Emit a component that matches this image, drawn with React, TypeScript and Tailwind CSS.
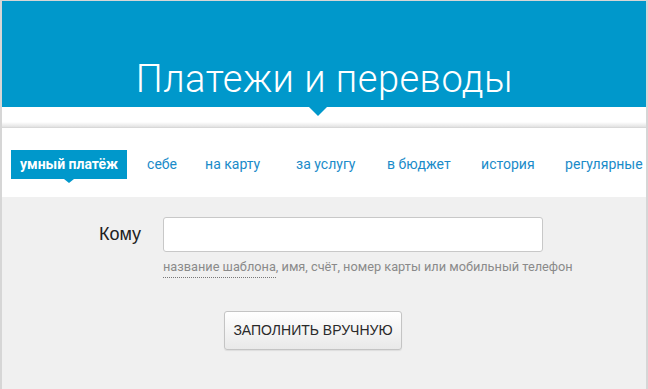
export default function App() {
  const tabs = [
    { label: "себе", w: "w-[58px]" },
    { label: "на карту", w: "w-[91px]" },
    { label: "за услугу", w: "w-[91px]" },
    { label: "в бюджет", w: "w-[94px]" },
    { label: "история", w: "w-[84px]" },
    { label: "регулярные", w: "w-[84px]" },
  ];

  return (
    <div className="w-[648px] h-[389px] overflow-hidden flex flex-col bg-[#f0f0f0] border-x-2 border-t border-[#d6d6d6] font-['Roboto',sans-serif]">
      {/* Header */}
      <header className="relative h-[106px] shrink-0 bg-[#0098cb] flex items-end justify-center pb-[9px] -ml-px">
        <h1 className="text-[38px] leading-none font-light text-white tracking-[0.5px] pl-[2px] whitespace-nowrap">
          Платежи и переводы
        </h1>
        <span className="absolute left-[308px] -bottom-[9px] w-0 h-0 border-x-[9px] border-x-transparent border-t-[9px] border-t-[#0098cb]" />
      </header>

      <div className="h-[21px] shrink-0 bg-gradient-to-b from-white from-75% to-[#e2e2e2] border-b border-[#d8d8d8]" />

      {/* Tabs */}
      <nav className="h-[69px] shrink-0 bg-white flex items-center pl-[9px] pt-[4px] text-[14px] whitespace-nowrap">
        <div className="relative shrink-0 h-[29px] px-[9px] flex items-center bg-[#0098cb] text-white font-bold">
          умный платёж
          <span className="absolute left-[53px] -bottom-[4px] w-0 h-0 border-x-[5px] border-x-transparent border-t-[4px] border-t-[#0098cb]" />
        </div>
        <div className="flex ml-[20px] text-[#1a8bc9]">
          {tabs.map((t) => (
            <span key={t.label} className={`${t.w} shrink-0`}>
              {t.label}
            </span>
          ))}
        </div>
      </nav>

      {/* Form */}
      <div className="flex-1 pt-[20px]">
        <div className="flex items-center ml-[97px]">
          <label className="w-[64px] text-[18px] text-[#222] font-['Liberation_Sans',sans-serif]">
            Кому
          </label>
          <input
            type="text"
            className="w-[380px] h-[35px] bg-white border border-[#c8c8c8] rounded-[3px] outline-none px-2"
          />
        </div>
        <div className="ml-[161px] mt-[7px] text-[12.75px] leading-[16px] text-[#8a8a8a] whitespace-nowrap">
          <span className="inline-block border-b border-dotted border-[#777] pb-[2px]">
            название шаблона
          </span>
          , имя, счёт, номер карты или мобильный телефон
        </div>
        <button className="mt-[33px] ml-[222px] w-[178px] h-[39px] rounded-[3px] border border-[#c4c4c4] bg-gradient-to-b from-white to-[#e9e9e9] shadow-[0_1px_1px_rgba(0,0,0,0.08)] text-[14px] text-[#2a2a2a] font-['Liberation_Sans',sans-serif]">
          ЗАПОЛНИТЬ ВРУЧНУЮ
        </button>
      </div>
    </div>
  );
}
